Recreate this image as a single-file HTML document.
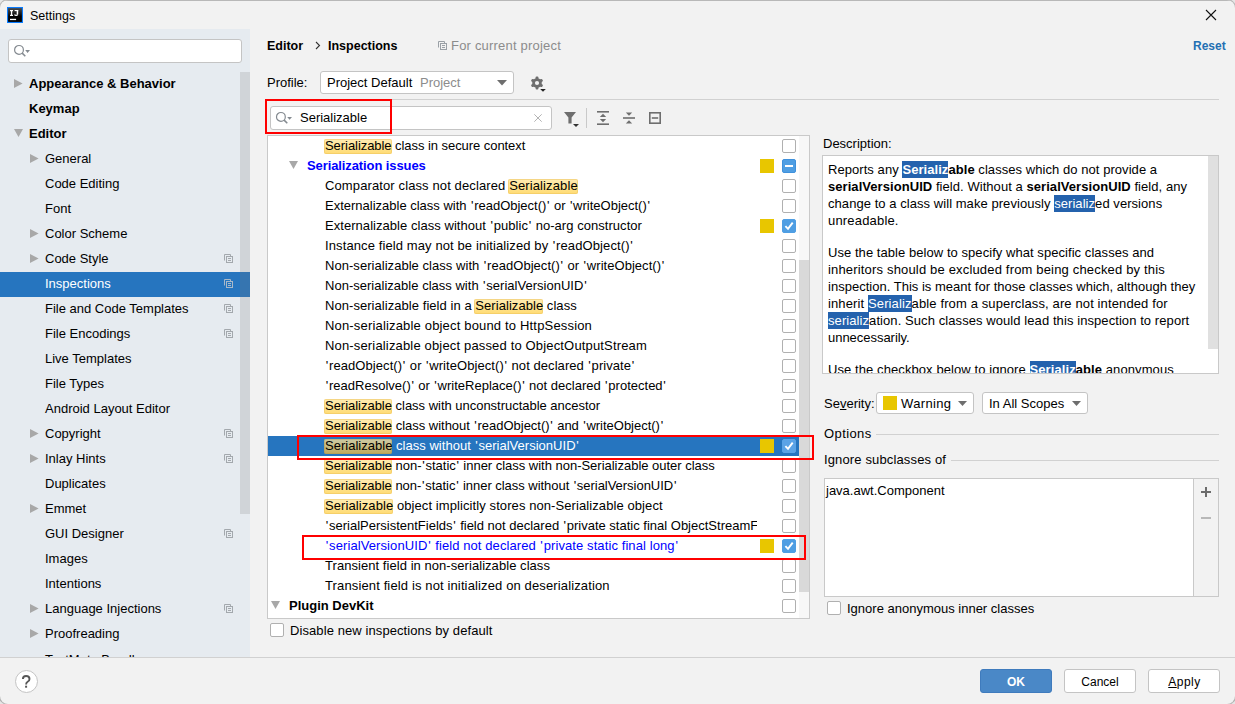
<!DOCTYPE html>
<html><head><meta charset="utf-8">
<style>
*{box-sizing:border-box;margin:0;padding:0}
html,body{width:1235px;height:704px;overflow:hidden;background:#e6e6e6}
body{font-family:"Liberation Sans",sans-serif;font-size:13px;color:#000;position:relative}
.a{position:absolute;white-space:nowrap}
.t{position:absolute;white-space:nowrap;line-height:20px;font-size:13px}
#win{position:absolute;left:0;top:0;width:1235px;height:704px;background:#f2f2f2;border-radius:8px;overflow:hidden;box-shadow:inset 0 0 0 1px rgba(160,160,160,.0)}
#corner{position:absolute;left:0;top:0;width:1235px;height:704px;border-radius:8px;box-shadow:0 0 0 1px #b4b4b4;pointer-events:none}
.t{z-index:0}
.hl{position:relative}
.hl::before{content:"";position:absolute;z-index:-1;left:-1px;right:0;top:1.26px;height:15px;border-radius:2px;background:linear-gradient(#ffecb4,#ffdb72);box-shadow:inset 0 0 0 1px rgba(236,196,96,.55)}
.sel .hl{color:#000}
.sel .hl::before{background:linear-gradient(#cdcba6,#c0aa5c);box-shadow:inset 0 0 0 1px rgba(170,150,80,.4)}
.cb{position:absolute;width:14px;height:14px;border:1px solid #b0b0b0;border-radius:2px;background:#fff}
.cb.on{background:#4f9ee3;border-color:#3f91dc}
.ysq{position:absolute;width:14px;height:14px;background:#e8c600}
.red{position:absolute;border:2px solid #ff0000}
.q{margin:0 0.75px}
.dh{background:#2462ad;color:#fff;font-weight:bold;padding:1.25px 0}
.combo{position:absolute;background:#fff;border:1px solid #c4c4c4;border-radius:3px}
.btn{position:absolute;background:#fff;border:1px solid #c4c4c4;border-radius:3px;text-align:center;font-size:12px;line-height:22px;padding-top:1px}
</style></head><body>
<div id="win">
<div class="a" style="left:0;top:0;width:1235px;height:1px;background:#b8b8b8"></div>

<svg class="a" style="left:7px;top:7px" width="16" height="16" viewBox="0 0 16 16">
<defs><linearGradient id="ijg" x1="0" y1="0" x2="0" y2="1"><stop offset="0" stop-color="#4a4a4a"/><stop offset="0.6" stop-color="#000"/></linearGradient></defs>
<rect x="0" y="0" width="16" height="16" fill="#0a7cff"/><rect x="1.1" y="1.1" width="13.8" height="13.8" fill="url(#ijg)"/>
<g fill="#fff"><rect x="3" y="3" width="3" height="1.2"/><rect x="3" y="7.8" width="3" height="1.2"/><rect x="3.9" y="3" width="1.3" height="6"/>
<rect x="7.6" y="3" width="3.6" height="1.1"/><rect x="9.7" y="3" width="1.5" height="4.6"/><rect x="3" y="11.8" width="6.1" height="1.3"/></g>
<path d="M10.45 7.4Q10.45 8.45 9.1 8.45Q7.9 8.45 7.6 7.5" fill="none" stroke="#fff" stroke-width="1.2"/></svg>
<div class="a" style="left:30px;top:6px;font-size:12.5px;line-height:20px">Settings</div>
<svg class="a" style="left:1205px;top:9px" width="12" height="12" viewBox="0 0 12 12"><path d="M1 1L11 11M11 1L1 11" stroke="#111" stroke-width="1.1"/></svg>
<div class="a" style="left:0;top:29px;width:250px;height:628px;background:#e6ebf0"></div>
<div class="a" style="left:8px;top:39px;width:234px;height:24px;background:#fff;border:1px solid #c4c4c4;border-radius:3px"></div>
<svg class="a" style="left:14px;top:44px" width="18" height="14" viewBox="0 0 18 14"><circle cx="5" cy="5.9" r="4.4" fill="none" stroke="#848a90" stroke-width="1.2"/><path d="M8.2 9.1L11.3 12.2" stroke="#848a90" stroke-width="1.5"/><path d="M11.2 6.1H16L13.6 8.9Z" fill="#848a90"/></svg>
<div class="a" style="left:0;top:29px;width:250px;height:628px;overflow:hidden">
<div class="a" style="left:29px;top:43px;line-height:23px;font-size:13px;font-weight:bold;color:#000">Appearance &amp; Behavior</div>
<svg class="a" style="left:14px;top:50px" width="9" height="10" viewBox="0 0 9 10"><path d="M0 0L8.6 4.45L0 8.9Z" fill="#a8a8a8"/></svg>
<div class="a" style="left:29px;top:68px;line-height:23px;font-size:13px;font-weight:bold;color:#000">Keymap</div>
<div class="a" style="left:29px;top:93px;line-height:23px;font-size:13px;font-weight:bold;color:#000">Editor</div>
<svg class="a" style="left:14px;top:100px" width="10" height="9" viewBox="0 0 10 9"><path d="M0 0L9 0L4.5 8Z" fill="#a8a8a8"/></svg>
<div class="a" style="left:45px;top:118px;line-height:23px;font-size:13px;font-weight:normal;color:#000">General</div>
<svg class="a" style="left:30px;top:125px" width="9" height="10" viewBox="0 0 9 10"><path d="M0 0L8.6 4.45L0 8.9Z" fill="#a8a8a8"/></svg>
<div class="a" style="left:45px;top:143px;line-height:23px;font-size:13px;font-weight:normal;color:#000">Code Editing</div>
<div class="a" style="left:45px;top:168px;line-height:23px;font-size:13px;font-weight:normal;color:#000">Font</div>
<div class="a" style="left:45px;top:193px;line-height:23px;font-size:13px;font-weight:normal;color:#000">Color Scheme</div>
<svg class="a" style="left:30px;top:200px" width="9" height="10" viewBox="0 0 9 10"><path d="M0 0L8.6 4.45L0 8.9Z" fill="#a8a8a8"/></svg>
<div class="a" style="left:45px;top:218px;line-height:23px;font-size:13px;font-weight:normal;color:#000">Code Style</div>
<svg class="a" style="left:30px;top:225px" width="9" height="10" viewBox="0 0 9 10"><path d="M0 0L8.6 4.45L0 8.9Z" fill="#a8a8a8"/></svg>
<svg class="a" style="left:224px;top:225px" width="10" height="10" viewBox="0 0 10 10"><path d="M0.5 6.5V0.5H6.5V2.5" fill="none" stroke="#a3a8ad" stroke-width="1"/><rect x="2.5" y="2.5" width="6" height="6" fill="none" stroke="#a3a8ad" stroke-width="1"/><path d="M4 4.5H7M4 6.5H7" stroke="#a3a8ad" stroke-width="1"/></svg>
<div class="a" style="left:0;top:243px;width:250px;height:25px;background:#2675bf"></div>
<div class="a" style="left:45px;top:243px;line-height:23px;font-size:13px;font-weight:normal;color:#fff">Inspections</div>
<svg class="a" style="left:224px;top:250px" width="10" height="10" viewBox="0 0 10 10"><path d="M0.5 6.5V0.5H6.5V2.5" fill="none" stroke="#a9b9c9" stroke-width="1"/><rect x="2.5" y="2.5" width="6" height="6" fill="none" stroke="#a9b9c9" stroke-width="1"/><path d="M4 4.5H7M4 6.5H7" stroke="#a9b9c9" stroke-width="1"/></svg>
<div class="a" style="left:45px;top:268px;line-height:23px;font-size:13px;font-weight:normal;color:#000">File and Code Templates</div>
<svg class="a" style="left:224px;top:275px" width="10" height="10" viewBox="0 0 10 10"><path d="M0.5 6.5V0.5H6.5V2.5" fill="none" stroke="#a3a8ad" stroke-width="1"/><rect x="2.5" y="2.5" width="6" height="6" fill="none" stroke="#a3a8ad" stroke-width="1"/><path d="M4 4.5H7M4 6.5H7" stroke="#a3a8ad" stroke-width="1"/></svg>
<div class="a" style="left:45px;top:293px;line-height:23px;font-size:13px;font-weight:normal;color:#000">File Encodings</div>
<svg class="a" style="left:224px;top:300px" width="10" height="10" viewBox="0 0 10 10"><path d="M0.5 6.5V0.5H6.5V2.5" fill="none" stroke="#a3a8ad" stroke-width="1"/><rect x="2.5" y="2.5" width="6" height="6" fill="none" stroke="#a3a8ad" stroke-width="1"/><path d="M4 4.5H7M4 6.5H7" stroke="#a3a8ad" stroke-width="1"/></svg>
<div class="a" style="left:45px;top:318px;line-height:23px;font-size:13px;font-weight:normal;color:#000">Live Templates</div>
<div class="a" style="left:45px;top:343px;line-height:23px;font-size:13px;font-weight:normal;color:#000">File Types</div>
<div class="a" style="left:45px;top:368px;line-height:23px;font-size:13px;font-weight:normal;color:#000">Android Layout Editor</div>
<div class="a" style="left:45px;top:393px;line-height:23px;font-size:13px;font-weight:normal;color:#000">Copyright</div>
<svg class="a" style="left:30px;top:400px" width="9" height="10" viewBox="0 0 9 10"><path d="M0 0L8.6 4.45L0 8.9Z" fill="#a8a8a8"/></svg>
<svg class="a" style="left:224px;top:400px" width="10" height="10" viewBox="0 0 10 10"><path d="M0.5 6.5V0.5H6.5V2.5" fill="none" stroke="#a3a8ad" stroke-width="1"/><rect x="2.5" y="2.5" width="6" height="6" fill="none" stroke="#a3a8ad" stroke-width="1"/><path d="M4 4.5H7M4 6.5H7" stroke="#a3a8ad" stroke-width="1"/></svg>
<div class="a" style="left:45px;top:418px;line-height:23px;font-size:13px;font-weight:normal;color:#000">Inlay Hints</div>
<svg class="a" style="left:30px;top:425px" width="9" height="10" viewBox="0 0 9 10"><path d="M0 0L8.6 4.45L0 8.9Z" fill="#a8a8a8"/></svg>
<svg class="a" style="left:224px;top:425px" width="10" height="10" viewBox="0 0 10 10"><path d="M0.5 6.5V0.5H6.5V2.5" fill="none" stroke="#a3a8ad" stroke-width="1"/><rect x="2.5" y="2.5" width="6" height="6" fill="none" stroke="#a3a8ad" stroke-width="1"/><path d="M4 4.5H7M4 6.5H7" stroke="#a3a8ad" stroke-width="1"/></svg>
<div class="a" style="left:45px;top:443px;line-height:23px;font-size:13px;font-weight:normal;color:#000">Duplicates</div>
<div class="a" style="left:45px;top:468px;line-height:23px;font-size:13px;font-weight:normal;color:#000">Emmet</div>
<svg class="a" style="left:30px;top:475px" width="9" height="10" viewBox="0 0 9 10"><path d="M0 0L8.6 4.45L0 8.9Z" fill="#a8a8a8"/></svg>
<div class="a" style="left:45px;top:493px;line-height:23px;font-size:13px;font-weight:normal;color:#000">GUI Designer</div>
<svg class="a" style="left:224px;top:500px" width="10" height="10" viewBox="0 0 10 10"><path d="M0.5 6.5V0.5H6.5V2.5" fill="none" stroke="#a3a8ad" stroke-width="1"/><rect x="2.5" y="2.5" width="6" height="6" fill="none" stroke="#a3a8ad" stroke-width="1"/><path d="M4 4.5H7M4 6.5H7" stroke="#a3a8ad" stroke-width="1"/></svg>
<div class="a" style="left:45px;top:518px;line-height:23px;font-size:13px;font-weight:normal;color:#000">Images</div>
<div class="a" style="left:45px;top:543px;line-height:23px;font-size:13px;font-weight:normal;color:#000">Intentions</div>
<div class="a" style="left:45px;top:568px;line-height:23px;font-size:13px;font-weight:normal;color:#000">Language Injections</div>
<svg class="a" style="left:30px;top:575px" width="9" height="10" viewBox="0 0 9 10"><path d="M0 0L8.6 4.45L0 8.9Z" fill="#a8a8a8"/></svg>
<svg class="a" style="left:224px;top:575px" width="10" height="10" viewBox="0 0 10 10"><path d="M0.5 6.5V0.5H6.5V2.5" fill="none" stroke="#a3a8ad" stroke-width="1"/><rect x="2.5" y="2.5" width="6" height="6" fill="none" stroke="#a3a8ad" stroke-width="1"/><path d="M4 4.5H7M4 6.5H7" stroke="#a3a8ad" stroke-width="1"/></svg>
<div class="a" style="left:45px;top:593px;line-height:23px;font-size:13px;font-weight:normal;color:#000">Proofreading</div>
<svg class="a" style="left:30px;top:600px" width="9" height="10" viewBox="0 0 9 10"><path d="M0 0L8.6 4.45L0 8.9Z" fill="#a8a8a8"/></svg>
<div class="a" style="left:45px;top:619px;line-height:23px;font-size:13px;font-weight:normal;color:#000">TextMate Bundles</div>
<div class="a" style="left:240px;top:43px;width:10px;height:442px;background:rgba(118,118,122,0.2)"></div>
</div>
<div class="a" style="left:0;top:657px;width:1235px;height:1px;background:#d1d1d1"></div>
<div class="a" style="left:267px;top:36px;line-height:20px;font-size:12.5px;font-weight:bold">Editor</div>
<svg class="a" style="left:315px;top:41px" width="6" height="9" viewBox="0 0 6 9"><path d="M1 1L4.5 4.5L1 8" fill="none" stroke="#333" stroke-width="1.1"/></svg>
<div class="a" style="left:328px;top:36px;line-height:20px;font-size:12.5px;font-weight:bold">Inspections</div>
<svg class="a" style="left:438px;top:41px" width="10" height="10" viewBox="0 0 10 10"><path d="M0.5 6.5V0.5H6.5V2.5" fill="none" stroke="#9aa0a6" stroke-width="1"/><rect x="2.5" y="2.5" width="6" height="6" fill="none" stroke="#9aa0a6" stroke-width="1"/><path d="M4 4.5H7M4 6.5H7" stroke="#9aa0a6" stroke-width="1"/></svg>
<div class="a" style="left:451px;top:36px;line-height:20px;font-size:13px;color:#8c8c8c;letter-spacing:0.2px">For current project</div>
<div class="a" style="left:1193px;top:36px;line-height:20px;font-size:12px;font-weight:bold;color:#2470b3">Reset</div>
<div class="a" style="left:267px;top:73px;line-height:20px;font-size:13px">Profile:</div>
<div class="combo" style="left:320px;top:71px;width:194px;height:23px"></div>
<div class="a" style="left:327px;top:73px;line-height:20px;font-size:13px">Project Default</div>
<div class="a" style="left:420px;top:73px;line-height:20px;font-size:13px;color:#8c8c8c">Project</div>
<svg class="a" style="left:497px;top:80px" width="11" height="6" viewBox="0 0 11 6"><path d="M0 0H10L5 5.5Z" fill="#6e6e6e"/></svg>
<svg class="a" style="left:529px;top:75px" width="18" height="18" viewBox="0 0 18 18">
<g fill="#6e6e6e"><circle cx="8" cy="8" r="4.8"/>
<rect x="6.6" y="1.6" width="2.8" height="12.8" rx="1"/>
<rect x="6.6" y="1.6" width="2.8" height="12.8" rx="1" transform="rotate(60 8 8)"/>
<rect x="6.6" y="1.6" width="2.8" height="12.8" rx="1" transform="rotate(120 8 8)"/></g>
<circle cx="8" cy="8" r="2.1" fill="#f2f2f2"/><path d="M11.2 14H16.8L14 16.8Z" fill="#222"/></svg>
<div class="a" style="left:267px;top:99px;width:952px;height:1px;background:#d1d1d1"></div>
<div class="a" style="left:270px;top:106px;width:282px;height:24px;background:#fff;border:1px solid #c4c4c4;border-radius:3px"></div>
<svg class="a" style="left:275px;top:111px" width="18" height="14" viewBox="0 0 18 14"><circle cx="5.9" cy="5.9" r="4.4" fill="none" stroke="#848a90" stroke-width="1.2"/><path d="M9.1 9.1L12.3 12.3" stroke="#848a90" stroke-width="1.5"/><path d="M12.2 6.1H17L14.6 8.8Z" fill="#848a90"/></svg>
<div class="a" style="left:300px;top:108px;line-height:20px;font-size:13px">Serializable</div>
<svg class="a" style="left:534px;top:114px" width="8" height="8" viewBox="0 0 8 8"><path d="M0.3 0.3L7.7 7.7M7.7 0.3L0.3 7.7" stroke="#b4b4b4" stroke-width="1"/></svg>
<svg class="a" style="left:563px;top:111px" width="18" height="17" viewBox="0 0 18 17"><path d="M1 1H13L8.6 6.6V12.6H5.4V6.6Z" fill="#6e6e6e"/><path d="M10 13H16L13 16Z" fill="#333"/></svg>
<div class="a" style="left:586px;top:108px;width:1px;height:20px;background:#c9c9c9"></div>
<svg class="a" style="left:596px;top:110px" width="14" height="16" viewBox="0 0 14 16"><g fill="#6e6e6e"><rect x="1" y="1" width="12" height="1.6"/><rect x="1" y="13.4" width="12" height="1.6"/><path d="M7 3.8L10.2 7H3.8Z"/><path d="M7 12.2L10.2 9H3.8Z"/></g></svg>
<svg class="a" style="left:622px;top:110px" width="14" height="16" viewBox="0 0 14 16"><g fill="#6e6e6e"><rect x="1" y="7.2" width="12" height="1.6"/><path d="M7 5.8L10.2 2.4H3.8Z"/><path d="M7 10.2L10.2 13.6H3.8Z"/></g></svg>
<svg class="a" style="left:648px;top:111px" width="14" height="14" viewBox="0 0 14 14"><rect x="1.8" y="1.8" width="10.4" height="10.4" fill="none" stroke="#6e6e6e" stroke-width="1.6"/><rect x="3.8" y="6.2" width="6.4" height="1.6" fill="#6e6e6e"/></svg>
<div class="a" style="left:267px;top:135px;width:543px;height:484px;background:#fff;border:1px solid #c9c9c9"></div>
<div class="a" style="left:799px;top:136px;width:10px;height:482px;background:#f7f7f7"></div>
<div class="a" style="left:799px;top:260px;width:10px;height:332px;background:#d9d9d9"></div>
<div class="a" style="left:268px;top:136px;width:531px;height:482px;overflow:hidden">
<div class="t" style="left:57px;top:0px;font-weight:normal;color:#000;letter-spacing:-0.057px"><span class="hl">Serializable</span> class in secure context</div>
<div class="cb" style="left:514px;top:3px"></div>
<div class="t" style="left:39px;top:20px;font-weight:bold;color:#0000ff;letter-spacing:-0.100px">Serialization issues</div>
<svg class="a" style="left:21px;top:25px" width="10" height="9" viewBox="0 0 10 9"><path d="M0 0L9 0L4.5 8Z" fill="#a8a8a8"/></svg>
<div class="ysq" style="left:492px;top:23px"></div>
<div class="cb on" style="left:514px;top:23px"></div>
<div class="a" style="left:517px;top:29px;width:8px;height:2px;background:#fff"></div>
<div class="t" style="left:57px;top:40px;font-weight:normal;color:#000;letter-spacing:0.117px">Comparator class not declared <span class="hl">Serializable</span></div>
<div class="cb" style="left:514px;top:43px"></div>
<div class="t" style="left:57px;top:60px;font-weight:normal;color:#000;letter-spacing:-0.003px">Externalizable class with <span class="q">'</span>readObject()<span class="q">'</span> or <span class="q">'</span>writeObject()<span class="q">'</span></div>
<div class="cb" style="left:514px;top:63px"></div>
<div class="t" style="left:57px;top:80px;font-weight:normal;color:#000;letter-spacing:0.047px">Externalizable class without <span class="q">'</span>public<span class="q">'</span> no-arg constructor</div>
<div class="ysq" style="left:492px;top:83px"></div>
<div class="cb on" style="left:514px;top:83px;background:#4f9ee3;border-color:#4f9ee3"></div>
<svg class="a" style="left:514px;top:83px" width="14" height="14" viewBox="0 0 14 14"><path d="M3.4 7.2L6 9.9L10.7 3.6" fill="none" stroke="#fff" stroke-width="1.9"/></svg>
<div class="t" style="left:57px;top:100px;font-weight:normal;color:#000;letter-spacing:0.107px">Instance field may not be initialized by <span class="q">'</span>readObject()<span class="q">'</span></div>
<div class="cb" style="left:514px;top:103px"></div>
<div class="t" style="left:57px;top:120px;font-weight:normal;color:#000;letter-spacing:0.043px">Non-serializable class with <span class="q">'</span>readObject()<span class="q">'</span> or <span class="q">'</span>writeObject()<span class="q">'</span></div>
<div class="cb" style="left:514px;top:123px"></div>
<div class="t" style="left:57px;top:140px;font-weight:normal;color:#000;letter-spacing:0.018px">Non-serializable class with <span class="q">'</span>serialVersionUID<span class="q">'</span></div>
<div class="cb" style="left:514px;top:143px"></div>
<div class="t" style="left:57px;top:160px;font-weight:normal;color:#000;letter-spacing:0.053px">Non-serializable field in a <span class="hl">Serializable</span> class</div>
<div class="cb" style="left:514px;top:163px"></div>
<div class="t" style="left:57px;top:180px;font-weight:normal;color:#000;letter-spacing:0.172px">Non-serializable object bound to HttpSession</div>
<div class="cb" style="left:514px;top:183px"></div>
<div class="t" style="left:57px;top:200px;font-weight:normal;color:#000;letter-spacing:0.161px">Non-serializable object passed to ObjectOutputStream</div>
<div class="cb" style="left:514px;top:203px"></div>
<div class="t" style="left:57px;top:220px;font-weight:normal;color:#000;letter-spacing:0.065px"><span class="q">'</span>readObject()<span class="q">'</span> or <span class="q">'</span>writeObject()<span class="q">'</span> not declared <span class="q">'</span>private<span class="q">'</span></div>
<div class="cb" style="left:514px;top:223px"></div>
<div class="t" style="left:57px;top:240px;font-weight:normal;color:#000;letter-spacing:0.007px"><span class="q">'</span>readResolve()<span class="q">'</span> or <span class="q">'</span>writeReplace()<span class="q">'</span> not declared <span class="q">'</span>protected<span class="q">'</span></div>
<div class="cb" style="left:514px;top:243px"></div>
<div class="t" style="left:57px;top:260px;font-weight:normal;color:#000;letter-spacing:-0.021px"><span class="hl">Serializable</span> class with unconstructable ancestor</div>
<div class="cb" style="left:514px;top:263px"></div>
<div class="t" style="left:57px;top:280px;font-weight:normal;color:#000;letter-spacing:-0.013px"><span class="hl">Serializable</span> class without <span class="q">'</span>readObject()<span class="q">'</span> and <span class="q">'</span>writeObject()<span class="q">'</span></div>
<div class="cb" style="left:514px;top:283px"></div>
<div class="a sel" style="left:0;top:300px;width:531px;height:20px;background:#2675bf"></div>
<div class="t sel" style="left:57px;top:300px;font-weight:normal;color:#fff;letter-spacing:0.020px"><span class="hl">Serializable</span> class without <span class="q">'</span>serialVersionUID<span class="q">'</span></div>
<div class="ysq" style="left:492px;top:303px"></div>
<div class="cb on" style="left:514px;top:303px;background:#5ba3e6;border-color:#5ba3e6"></div>
<svg class="a" style="left:514px;top:303px" width="14" height="14" viewBox="0 0 14 14"><path d="M3.4 7.2L6 9.9L10.7 3.6" fill="none" stroke="#fff" stroke-width="1.9"/></svg>
<div class="t" style="left:57px;top:320px;font-weight:normal;color:#000;letter-spacing:-0.017px"><span class="hl">Serializable</span> non-<span class="q">'</span>static<span class="q">'</span> inner class with non-Serializable outer class</div>
<div class="cb" style="left:514px;top:323px"></div>
<div class="t" style="left:57px;top:340px;font-weight:normal;color:#000;letter-spacing:-0.032px"><span class="hl">Serializable</span> non-<span class="q">'</span>static<span class="q">'</span> inner class without <span class="q">'</span>serialVersionUID<span class="q">'</span></div>
<div class="cb" style="left:514px;top:343px"></div>
<div class="t" style="left:57px;top:360px;font-weight:normal;color:#000;letter-spacing:0.087px"><span class="hl">Serializable</span> object implicitly stores non-Serializable object</div>
<div class="cb" style="left:514px;top:363px"></div>
<div class="t" style="left:57px;top:380px;width:432px;overflow:hidden;font-weight:normal;color:#000;letter-spacing:0.000px"><span class="q">'</span>serialPersistentFields<span class="q">'</span> field not declared <span class="q">'</span>private static final ObjectStreamField[]<span class="q">'</span></div>
<div class="cb" style="left:514px;top:383px"></div>
<div class="t" style="left:57px;top:400px;font-weight:normal;color:#0000ff;letter-spacing:0.094px"><span class="q">'</span>serialVersionUID<span class="q">'</span> field not declared <span class="q">'</span>private static final long<span class="q">'</span></div>
<div class="ysq" style="left:492px;top:403px"></div>
<div class="cb on" style="left:514px;top:403px;background:#4f9ee3;border-color:#4f9ee3"></div>
<svg class="a" style="left:514px;top:403px" width="14" height="14" viewBox="0 0 14 14"><path d="M3.4 7.2L6 9.9L10.7 3.6" fill="none" stroke="#fff" stroke-width="1.9"/></svg>
<div class="t" style="left:57px;top:420px;font-weight:normal;color:#000;letter-spacing:0.053px">Transient field in non-serializable class</div>
<div class="cb" style="left:514px;top:423px"></div>
<div class="t" style="left:57px;top:440px;font-weight:normal;color:#000;letter-spacing:0.131px">Transient field is not initialized on deserialization</div>
<div class="cb" style="left:514px;top:443px"></div>
<div class="t" style="left:21px;top:460px;font-weight:bold;color:#000;letter-spacing:0.000px">Plugin DevKit</div>
<svg class="a" style="left:3px;top:465px" width="10" height="9" viewBox="0 0 10 9"><path d="M0 0L9 0L4.5 8Z" fill="#a8a8a8"/></svg>
<div class="cb" style="left:514px;top:463px"></div>
</div>
<div class="cb" style="left:270px;top:623px"></div>
<div class="a" style="left:290px;top:621px;line-height:20px;font-size:13px;letter-spacing:0.09px">Disable new inspections by default</div>
<div class="red" style="left:265px;top:99px;width:127px;height:35px"></div>
<div class="red" style="left:297px;top:435px;width:517px;height:25px"></div>
<div class="red" style="left:302px;top:535px;width:504px;height:25px"></div>
<div class="a" style="left:823px;top:134px;line-height:20px;font-size:13px">Description:</div>
<div class="a" style="left:822px;top:155px;width:397px;height:219px;background:#fff;border:1px solid #c9c9c9;overflow:hidden">
<div class="a" style="left:385px;top:0;width:10px;height:193px;background:#e0e0e0"></div>
<div class="a" style="left:5px;top:5px;line-height:17px;font-size:13px;letter-spacing:0.059px">Reports any <span class="dh">Serializ</span><b>able</b> classes which do not provide a</div>
<div class="a" style="left:5px;top:22px;line-height:17px;font-size:13px;letter-spacing:0.057px"><b>serialVersionUID</b> field. Without a <b>serialVersionUID</b> field, any</div>
<div class="a" style="left:5px;top:39px;line-height:17px;font-size:13px;letter-spacing:0.056px">change to a class will make previously <span class="dh" style="font-weight:normal">serializ</span>ed versions</div>
<div class="a" style="left:5px;top:56px;line-height:17px;font-size:13px;letter-spacing:0.180px">unreadable.</div>
<div class="a" style="left:5px;top:88px;line-height:17px;font-size:13px;letter-spacing:0.055px">Use the table below to specify what specific classes and</div>
<div class="a" style="left:5px;top:105px;line-height:17px;font-size:13px;letter-spacing:0.171px">inheritors should be excluded from being checked by this</div>
<div class="a" style="left:5px;top:122px;line-height:17px;font-size:13px;letter-spacing:0.016px">inspection. This is meant for those classes which, although they</div>
<div class="a" style="left:5px;top:139px;line-height:17px;font-size:13px;letter-spacing:0.122px">inherit <span class="dh" style="font-weight:normal">Serializ</span>able from a superclass, are not intended for</div>
<div class="a" style="left:5px;top:156px;line-height:17px;font-size:13px;letter-spacing:0.079px"><span class="dh" style="font-weight:normal">serializ</span>ation. Such classes would lead this inspection to report</div>
<div class="a" style="left:5px;top:173px;line-height:17px;font-size:13px;letter-spacing:-0.031px">unnecessarily.</div>
<div class="a" style="left:5px;top:205px;line-height:17px;font-size:13px;letter-spacing:0.085px">Use the checkbox below to ignore <span class="dh">Serializ</span><b>able</b> anonymous</div>
</div>
<div class="a" style="left:824px;top:394px;line-height:20px;font-size:13px">Se<u>v</u>erity:</div>
<div class="combo" style="left:876px;top:392px;width:98px;height:22px"></div>
<div class="ysq" style="left:883px;top:396px"></div>
<div class="a" style="left:901px;top:394px;line-height:20px;font-size:13px;letter-spacing:0.35px">Warning</div>
<svg class="a" style="left:958px;top:401px" width="10" height="6" viewBox="0 0 10 6"><path d="M0 0H9L4.5 5Z" fill="#6e6e6e"/></svg>
<div class="combo" style="left:982px;top:392px;width:106px;height:22px"></div>
<div class="a" style="left:989px;top:394px;line-height:20px;font-size:13px">In All Scopes</div>
<svg class="a" style="left:1072px;top:401px" width="10" height="6" viewBox="0 0 10 6"><path d="M0 0H9L4.5 5Z" fill="#6e6e6e"/></svg>
<div class="a" style="left:824px;top:424px;line-height:20px;font-size:13px;letter-spacing:0.4px">Options</div>
<div class="a" style="left:876px;top:434px;width:343px;height:1px;background:#d1d1d1"></div>
<div class="a" style="left:824px;top:450px;line-height:20px;font-size:13px;letter-spacing:0.14px">Ignore subclasses of</div>
<div class="a" style="left:951px;top:460px;width:268px;height:1px;background:#d1d1d1"></div>
<div class="a" style="left:824px;top:478px;width:395px;height:119px;background:#fff;border:1px solid #c9c9c9"></div>
<div class="a" style="left:1193px;top:479px;width:25px;height:117px;background:#f2f2f2;border-left:1px solid #c9c9c9"></div>
<div class="a" style="left:826px;top:481px;line-height:20px;font-size:13px">java.awt.Component</div>
<svg class="a" style="left:1200px;top:486px" width="12" height="12" viewBox="0 0 12 12"><path d="M6 1V11M1 6H11" stroke="#6c6c6c" stroke-width="2"/></svg>
<div class="a" style="left:1201px;top:517px;width:10px;height:2px;background:#b8b8b8"></div>
<div class="cb" style="left:827px;top:601px"></div>
<div class="a" style="left:847px;top:599px;line-height:20px;font-size:13px">Ignore anonymous inner classes</div>
<div class="a" style="left:15px;top:670px;width:23px;height:23px;border:1px solid #c4c4c4;border-radius:50%;background:#fff"></div>
<svg class="a" style="left:15px;top:670px" width="23" height="23" viewBox="0 -0.7 23 23"><path d="M7.9 8.3Q7.9 5.3 11.1 5.3Q14.5 5.3 14.5 8.2Q14.5 10 12.6 11.1Q11.1 12 11.1 13.8" fill="none" stroke="#575757" stroke-width="1.9"/><rect x="10.1" y="15" width="2" height="2" fill="#575757"/></svg>
<div class="btn" style="left:980px;top:669px;width:72px;height:24px;background:#4a88c7;border-color:#3f7bbd;color:#fff;font-weight:bold">OK</div>
<div class="btn" style="left:1064px;top:669px;width:72px;height:24px">Cancel</div>
<div class="btn" style="left:1148px;top:669px;width:72px;height:24px;letter-spacing:0.5px;padding-left:1px"><u>A</u>pply</div>
</div><div id="corner"></div></body></html>
